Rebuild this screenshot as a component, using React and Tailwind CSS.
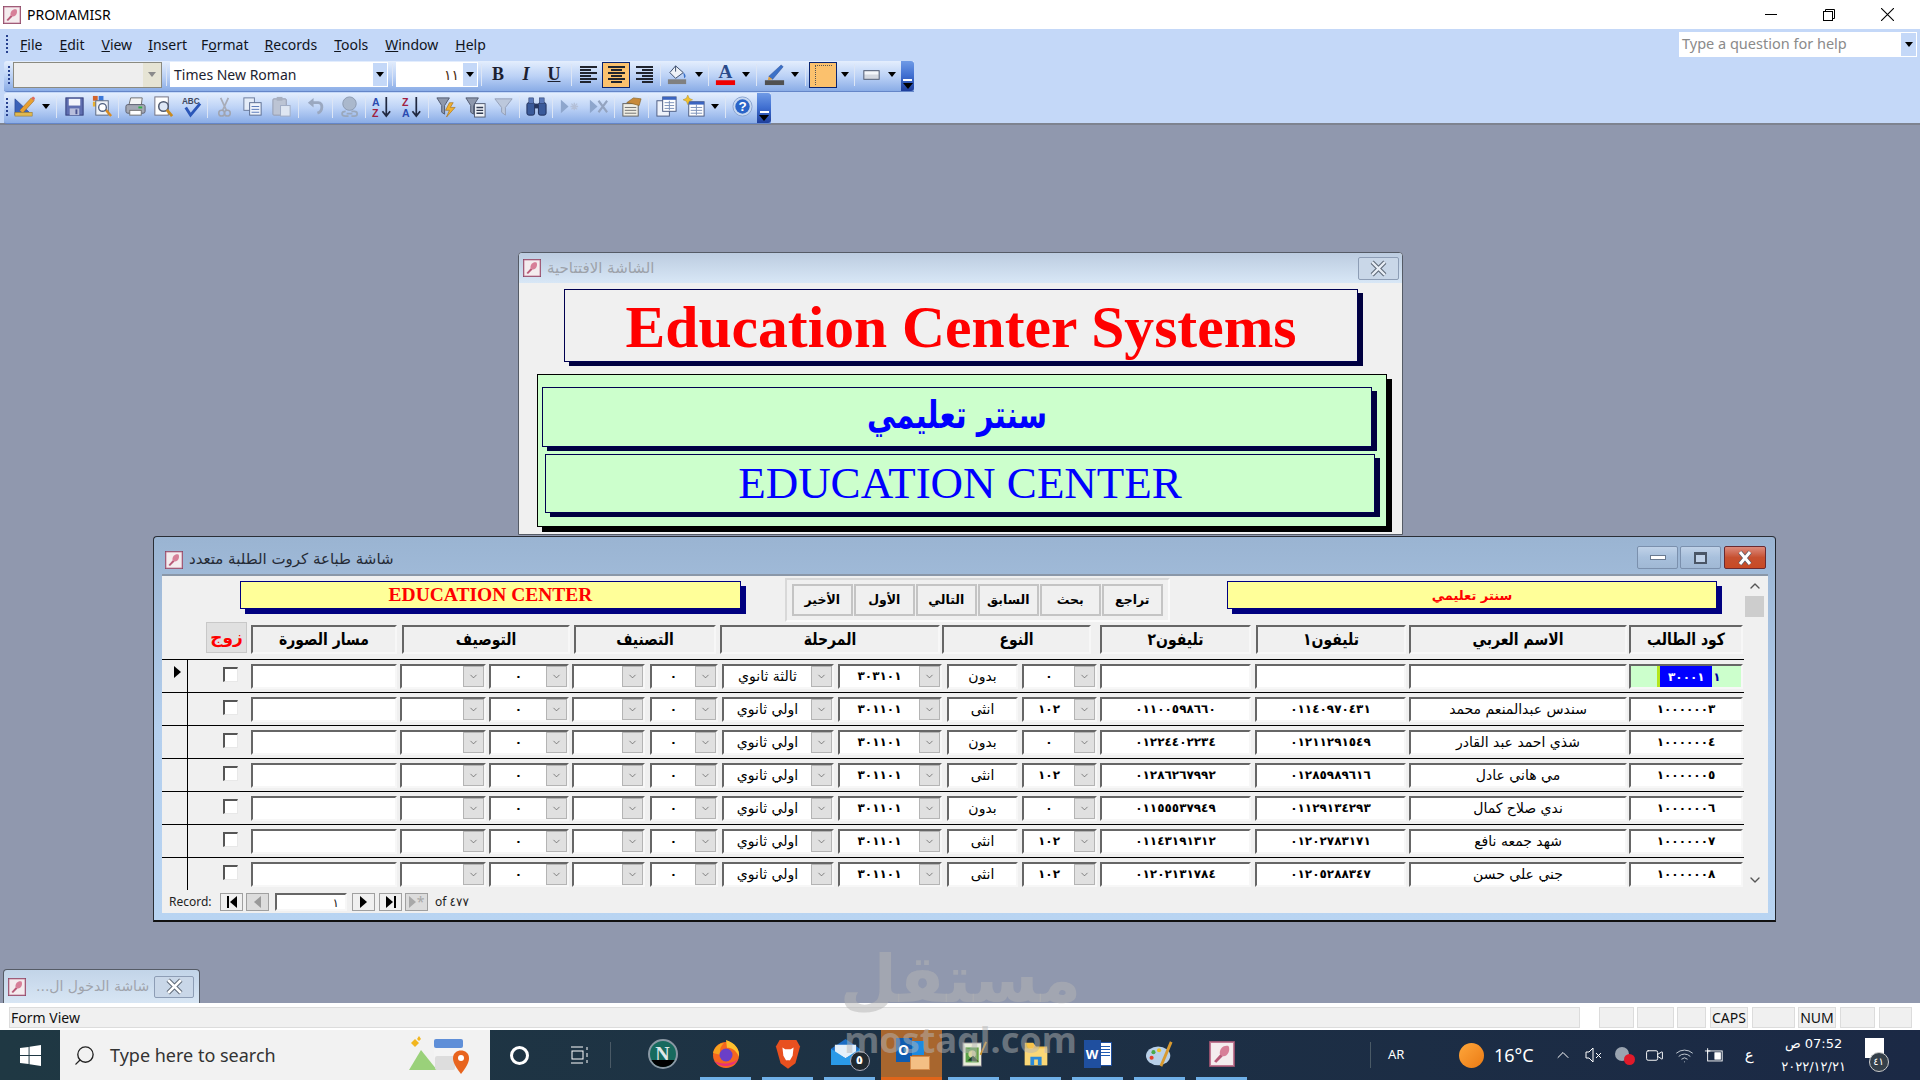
import React from 'react';
import { ChevronDown, ChevronUp, Search, Wifi, Video } from 'lucide-react';

const ar = "font-['DejaVu_Sans',sans-serif]";
const ui = "font-['Noto_Sans',sans-serif]";
const serif = "font-['Liberation_Serif',serif]";

const sunken = 'border-2 border-t-[#666666] border-l-[#666666] border-r-[#f7f7f7] border-b-[#f7f7f7]';

const rows = [
    { code: '١٠٠٠٠٠٠٣', name: 'سندس عبدالمنعم محمد', p1: '٠١١٤٠٩٧٠٤٣١', p2: '٠١١٠٠٥٩٨٦٦٠', typeNo: '١٠٢', type: 'انثى', stageNo: '٣٠١١٠١', stage: 'اولي ثانوي' },
    { code: '١٠٠٠٠٠٠٤', name: 'شذي احمد عبد القادر', p1: '٠١٢١١٢٩١٥٤٩', p2: '٠١٢٢٤٤٠٢٢٣٤', typeNo: '٠', type: 'بدون', stageNo: '٣٠١١٠١', stage: 'اولي ثانوي' },
    { code: '١٠٠٠٠٠٠٥', name: 'مي هاني عادل', p1: '٠١٢٨٥٩٨٩٦١٦', p2: '٠١٢٨٦٢٦٧٩٩٢', typeNo: '١٠٢', type: 'انثى', stageNo: '٣٠١١٠١', stage: 'اولي ثانوي' },
    { code: '١٠٠٠٠٠٠٦', name: 'ندي صلاح كمال', p1: '٠١١٢٩١٣٤٢٩٣', p2: '٠١١٥٥٥٣٧٩٤٩', typeNo: '٠', type: 'بدون', stageNo: '٣٠١١٠١', stage: 'اولي ثانوي' },
    { code: '١٠٠٠٠٠٠٧', name: 'شهد جمعه نافع', p1: '٠١٢٠٢٧٨٣١٧١', p2: '٠١١٤٣١٩١٣١٢', typeNo: '١٠٢', type: 'انثى', stageNo: '٣٠١١٠١', stage: 'اولي ثانوي' },
    { code: '١٠٠٠٠٠٠٨', name: 'جني علي حسن', p1: '٠١٢٠٥٢٨٨٣٤٧', p2: '٠١٢٠٢١٣١٧٨٤', typeNo: '١٠٢', type: 'انثى', stageNo: '٣٠١١٠١', stage: 'اولي ثانوي' },
];

const headers = [
    { label: 'مسار الصورة', cls: 'w-[146px] ml-[4px]' },
    { label: 'التوصيف', cls: 'w-[168px] ml-[5px]' },
    { label: 'التصنيف', cls: 'w-[142px] ml-[4px]' },
    { label: 'المرحلة', cls: 'w-[220px] ml-[4px]' },
    { label: 'النوع', cls: 'w-[149px] ml-[2px]' },
    { label: 'تليفون٢', cls: 'w-[151px] ml-[9px]' },
    { label: 'تليفون١', cls: 'w-[150px] ml-[5px]' },
    { label: 'الاسم العربي', cls: 'w-[218px] ml-[3px]' },
    { label: 'كود الطالب', cls: 'w-[114px] ml-[2px]' },
];

function AccessIcon({ className }) {
    return (
        <svg viewBox="0 0 18 18" className={className}>
            <rect x="0.5" y="0.5" width="17" height="17" fill="#f4ecee" stroke="#8a4a66" />
            <path d="M1 1 H17 V17 H1 Z" fill="none" stroke="#c07a94" strokeWidth="0.8" />
            <path d="M3.5 14 L8 9 L9.5 10.5 L5 15 Z" fill="#b85a78" />
            <path d="M7.5 9 C7 5 10.5 2.5 13.5 3.5 C15 6.5 13 11 9.5 10.5 Z" fill="#d77f98" />
        </svg>
    );
}

function Grip() {
    return (
        <div className="flex flex-col gap-[2px] w-[2px] shrink-0">
            {[0, 1, 2, 3, 4].map(i => <div key={i} className="w-[2px] h-[2px] bg-[#27418f]" />)}
        </div>
    );
}

function Dd({ className = 'w-[15px]' }) {
    return (
        <div className={`${className} shrink-0 flex items-center justify-center`}>
            <div className="w-0 h-0 border-l-[4px] border-r-[4px] border-t-[5px] border-l-transparent border-r-transparent border-t-black" />
        </div>
    );
}

function Sep({ className }) {
    return (
        <div className={`${className} shrink-0 flex justify-center`}>
            <div className="w-px h-[22px] bg-[#8aa8dc] border-r border-white/70" />
        </div>
    );
}

function Slot({ children, className = '' }) {
    return <div className={`w-[28px] h-[26px] shrink-0 flex items-center justify-center ${className}`}>{children}</div>;
}

function Overflow({ className }) {
    return (
        <div className={`${className} shrink-0 self-stretch -mb-[3px] bg-linear-to-b from-[#6f9ae6] via-[#3f6ed0] to-[#1f3f9c] rounded-r-[3px] flex flex-col items-center justify-end pb-[2px]`}>
            <div className="w-[9px] h-[2px] bg-white mb-[2px]" />
            <div className="w-0 h-0 border-l-[5px] border-r-[5px] border-t-[6px] border-l-transparent border-r-transparent border-t-black" />
        </div>
    );
}

// toolbar drawings, all on a 24 box
const Svg = ({ children }) => <svg viewBox="0 0 24 24" className="w-[23px] h-[23px]">{children}</svg>;

const icons = {
    form: <Svg><path d="M2 4 L17 18 V21 H2 Z" fill="#3b62b8" stroke="#24408c" strokeWidth="0.6" /><path d="M7 16 L19 3 L22 6 L10 19 Z" fill="#e8a030" stroke="#8a5a20" strokeWidth="0.5" /><path d="M19 3 L22 6 L23 3 L21 1.5 Z" fill="#e06a5a" /><rect x="2" y="18" width="18" height="4" fill="#e0b850" stroke="#8a6a20" strokeWidth="0.5" /></Svg>,
    save: <Svg><rect x="3" y="3" width="18" height="18" fill="#5f6eb0" stroke="#323c78" /><rect x="6" y="4" width="12" height="7" fill="#f2f4fa" /><rect x="7" y="14" width="10" height="7" fill="#b8bedc" /><rect x="13" y="15" width="2" height="5" fill="#4a5490" /></Svg>,
    saveAs: <Svg><rect x="2" y="1" width="5" height="5" fill="#d2642c" /><rect x="8" y="1" width="5" height="5" fill="#3b78d8" /><rect x="2" y="7" width="5" height="5" fill="#e8b030" /><rect x="5" y="6" width="13" height="15" fill="#eef2f8" stroke="#5a6880" /><path d="M15 15 L21 22" stroke="#d88a20" strokeWidth="2.5" /><circle cx="12" cy="13" r="4" fill="#fff" stroke="#506080" strokeWidth="1.4" /></Svg>,
    print: <Svg><path d="M7 3 H19 L18 11 H5 Z" fill="#f4f4f4" stroke="#707070" /><rect x="2" y="10" width="20" height="9" rx="2" fill="#a4a8b4" stroke="#5c6070" /><rect x="6" y="16" width="12" height="5" fill="#fff" stroke="#707070" /><rect x="15" y="12" width="4" height="2" fill="#30b048" /></Svg>,
    preview: <Svg><rect x="3" y="2" width="14" height="19" fill="#fff" stroke="#707080" /><circle cx="12" cy="12" r="5" fill="#dfe8f6" stroke="#505a70" strokeWidth="1.6" /><path d="M15.5 15.5 L21 22" stroke="#c88a20" strokeWidth="3" /></Svg>,
    spell: <Svg><text x="2" y="9" fontSize="8.5" fontWeight="700" fill="#404a60" fontFamily="Liberation Sans">ABC</text><path d="M6 13 L11 21 L21 9" stroke="#2a56b8" strokeWidth="3" fill="none" /></Svg>,
    cut: <Svg><path d="M8 3 L14 16 M16 3 L10 16" stroke="#a8acb8" strokeWidth="1.8" /><circle cx="9" cy="19" r="3" fill="none" stroke="#a0a4b0" strokeWidth="1.6" /><circle cx="15" cy="19" r="3" fill="none" stroke="#a0a4b0" strokeWidth="1.6" /></Svg>,
    copy: <Svg><rect x="3" y="3" width="11" height="13" fill="#e4ecf8" stroke="#6a7a9c" /><rect x="9" y="8" width="12" height="13" fill="#eef3fb" stroke="#5a6c90" /><path d="M11 12h8M11 15h8M11 18h8" stroke="#5878b8" /></Svg>,
    paste: <Svg><rect x="3" y="4" width="14" height="17" rx="1" fill="#bcc4d4" stroke="#949cb0" /><rect x="7" y="2" width="6" height="4" fill="#a8b0c0" /><rect x="11" y="11" width="10" height="11" fill="#dfe6f2" stroke="#a0acc4" /></Svg>,
    undo: <Svg><path d="M8 8 H15 C20 8 20 17 14 19" stroke="#9aa8c0" strokeWidth="3" fill="none" /><path d="M10 3 L4 8 L10 13 Z" fill="#9aa8c0" /></Svg>,
    link: <Svg><circle cx="12" cy="9" r="7" fill="#aab8cc" stroke="#8c9ab0" /><path d="M8 17 C3 17 3 22 8 22 L11 22 M14 17 H17 C21 17 21 22 17 22 L14 22 M9 19.5 H15" stroke="#9aa8bc" strokeWidth="1.8" fill="none" /></Svg>,
    az: <Svg><text x="2" y="11" fontSize="11" fontWeight="700" fill="#2a4ab0" fontFamily="Liberation Sans">A</text><text x="2" y="23" fontSize="11" fontWeight="700" fill="#a02040" fontFamily="Liberation Sans">Z</text><path d="M17 2 V21 M13 17 L17 22 L21 17" stroke="#202840" strokeWidth="1.8" fill="none" /></Svg>,
    za: <Svg><text x="2" y="11" fontSize="11" fontWeight="700" fill="#a02040" fontFamily="Liberation Sans">Z</text><text x="2" y="23" fontSize="11" fontWeight="700" fill="#2a4ab0" fontFamily="Liberation Sans">A</text><path d="M17 2 V21 M13 17 L17 22 L21 17" stroke="#202840" strokeWidth="1.8" fill="none" /></Svg>,
    bolt: <Svg><path d="M2 3 H15 L10 11 V20 L7 18 V11 Z" fill="#8e98ac" stroke="#505a70" /><path d="M15 8 L11 16 H15 L12 23 L21 13 H16 L19 8 Z" fill="#f0b030" stroke="#a06810" strokeWidth="0.6" /></Svg>,
    filterForm: <Svg><path d="M2 3 H15 L10 11 V20 L7 18 V11 Z" fill="#8e98ac" stroke="#505a70" /><rect x="11" y="9" width="11" height="14" fill="#eef2f8" stroke="#505a70" /><path d="M13 13h7M13 16h7M13 19h7" stroke="#303a50" strokeWidth="1.4" /></Svg>,
    filter: <Svg><path d="M3 4 H21 L14 13 V21 L10 18 V13 Z" fill="#bcc8dc" stroke="#94a0b8" /></Svg>,
    binoc: <Svg><rect x="2" y="8" width="8" height="13" rx="2" fill="#3a5a9a" stroke="#1f2f5a" /><rect x="14" y="8" width="8" height="13" rx="2" fill="#3a5a9a" stroke="#1f2f5a" /><rect x="4" y="3" width="5" height="6" fill="#5a78b8" stroke="#1f2f5a" strokeWidth="0.5" /><rect x="15" y="3" width="5" height="6" fill="#5a78b8" stroke="#1f2f5a" strokeWidth="0.5" /><rect x="10" y="9" width="4" height="5" fill="#26365f" /></Svg>,
    newRec: <Svg><path d="M3 5 L11 12 L3 19 Z" fill="#8ea6cc" /><path d="M17 8 V16 M13 12 H21 M14 9 L20 15 M20 9 L14 15" stroke="#b4c0d8" strokeWidth="1.4" /></Svg>,
    delRec: <Svg><path d="M3 5 L11 12 L3 19 Z" fill="#8ea6cc" /><path d="M12 6 L21 18 M21 6 L12 18" stroke="#94a4c0" strokeWidth="2.2" /></Svg>,
    db: <Svg><rect x="3" y="9" width="16" height="13" fill="#f0eee4" stroke="#606060" /><path d="M5 13h12M5 16h12M5 19h12" stroke="#707070" /><path d="M7 8 L14 3 L22 4 L20 11 L13 9 Z" fill="#c88a3a" stroke="#7a5a20" strokeWidth="0.6" /></Svg>,
    win: <Svg><rect x="2" y="6" width="13" height="16" fill="#eef2fa" stroke="#4a5a80" /><rect x="8" y="2" width="14" height="15" fill="#fff" stroke="#4a5a80" /><rect x="8" y="2" width="14" height="3" fill="#3a64c0" /><path d="M10 8h10M10 11h10M10 14h10M15 6v10" stroke="#7a90b8" /></Svg>,
    newObj: <Svg><rect x="6" y="7" width="16" height="15" fill="#fff" stroke="#4a5a80" /><rect x="6" y="7" width="16" height="3" fill="#3a64c0" /><path d="M8 13h12M8 16h12M8 19h12M14 10v11" stroke="#7a90b8" /><path d="M5 0 L6.5 3.5 L10 5 L6.5 6.5 L5 10 L3.5 6.5 L0 5 L3.5 3.5 Z" fill="#f0c030" stroke="#a88010" strokeWidth="0.4" /></Svg>,
    help: <Svg><circle cx="12" cy="12" r="10" fill="#c8d8f0" stroke="#8aa4d0" /><circle cx="12" cy="12" r="7.5" fill="#2a64c8" /><text x="12" y="17" fontSize="14" fontWeight="700" fill="#fff" textAnchor="middle" fontFamily="Liberation Sans">?</text></Svg>,
    fill: <Svg><path d="M10 3 L18 10 L10 16 L4 10 Z" fill="#eef2f8" stroke="#3a4a6a" /><path d="M10 3 V9" stroke="#3a4a6a" /><path d="M18 10 C21 12 21 15 19 16 Z" fill="#3a70c8" /><rect x="2" y="17" width="19" height="5" fill="#808080" /></Svg>,
    fontColor: <Svg><text x="12" y="16" fontSize="20" fontWeight="700" fill="#2a4a8a" textAnchor="middle" fontFamily="Liberation Serif">A</text><rect x="2" y="18" width="20" height="5" fill="#f00000" /></Svg>,
    line: <Svg><path d="M6 14 L19 2 L21 4 L10 17 Z" fill="#3a70c8" stroke="#1f3f88" strokeWidth="0.5" /><path d="M6 14 L10 17 L5 18 Z" fill="#e0a040" /><rect x="2" y="18" width="20" height="5" fill="#505050" /></Svg>,
    special: <Svg><rect x="4" y="8" width="16" height="9" fill="#d4d8e0" stroke="#505a70" /><rect x="5" y="9" width="14" height="3" fill="#f4f6fa" /></Svg>,
};

function Align({ kind }) {
    const widths = kind === 'left' ? ['w-full', 'w-[11px]', 'w-full', 'w-[11px]', 'w-full', 'w-[11px]']
        : kind === 'right' ? ['w-full', 'w-[11px] self-end', 'w-full', 'w-[11px] self-end', 'w-full', 'w-[11px] self-end']
            : ['w-full', 'w-[11px] self-center', 'w-full', 'w-[11px] self-center', 'w-full', 'w-[11px] self-center'];
    return (
        <div className="w-[17px] flex flex-col gap-[1px]">
            {widths.map((w, i) => <div key={i} className={`${w} h-[2px] bg-[#20242e]`} />)}
        </div>
    );
}

const barBg = 'bg-linear-to-b from-[#e4eefd] via-[#bcd2f6] to-[#8aace6] border-b border-[#6586c8] rounded-l-[3px] pb-[3px]';

function Toolbar1() {
    return (
        <div className={`w-[910px] ml-[4px] h-[31px] flex items-center ${barBg}`}>
            <div className="w-[9px] flex justify-center shrink-0"><Grip /></div>
            <div className="w-[149px] h-[26px] bg-[#eeeeee] border border-[#8a8a80] flex items-center justify-end shrink-0">
                <div className="w-[18px] h-full bg-[#e6e4d4] flex items-center justify-center">
                    <div className="w-0 h-0 border-l-[4px] border-r-[4px] border-t-[5px] border-l-transparent border-r-transparent border-t-[#8a8a8a]" />
                </div>
            </div>
            <Sep className="w-[8px]" />
            <div className={`w-[218px] h-[25px] bg-white flex items-center shrink-0 pl-[4px] text-[14px] text-[#1c2230] ${ui}`}>
                <span className="flex-1">Times New Roman</span>
                <div className="w-[16px] h-full bg-[#c4d8f8] border border-white flex items-center justify-center"><Dd className="w-[10px]" /></div>
            </div>
            <Sep className="w-[8px]" />
            <div className="w-[82px] h-[25px] bg-white flex items-center shrink-0">
                <span className={`flex-1 text-right pr-[3px] text-[14px] leading-none tracking-[1px] text-[#4a2c10] ${ar}`}>١١</span>
                <div className="w-[16px] h-full bg-[#c4d8f8] border border-white flex items-center justify-center"><Dd className="w-[10px]" /></div>
            </div>
            <Sep className="w-[6px]" />
            <Slot><span className={`text-[18px] font-bold text-[#1c2030] ${serif}`}>B</span></Slot>
            <Slot><span className={`text-[18px] italic font-bold text-[#1c2030] ${serif}`}>I</span></Slot>
            <Slot><span className={`text-[18px] underline font-bold text-[#1c2030] ${serif}`}>U</span></Slot>
            <Sep className="w-[6px]" />
            <Slot><Align kind="left" /></Slot>
            <Slot className="bg-[#fbc16d] border border-[#0a2470]"><Align kind="center" /></Slot>
            <Slot><Align kind="right" /></Slot>
            <Sep className="w-[5px]" />
            <Slot>{icons.fill}</Slot>
            <Dd />
            <Sep className="w-[5px]" />
            <Slot>{icons.fontColor}</Slot>
            <Dd className="w-[14px]" />
            <Sep className="w-[7px]" />
            <Slot>{icons.line}</Slot>
            <Dd className="w-[13px]" />
            <Sep className="w-[8px]" />
            <Slot className="bg-[#fbc16d] border border-[#0a2470]">
                <div className="w-[17px] h-[20px] border-t border-l border-dotted border-[#555]" />
            </Slot>
            <Dd />
            <Sep className="w-[5px]" />
            <Slot>{icons.special}</Slot>
            <Dd className="w-[14px]" />
            <div className="w-[2px] shrink-0" />
            <Overflow className="w-[13px]" />
        </div>
    );
}

function Toolbar2() {
    return (
        <div className={`w-[767px] ml-[4px] h-[31px] flex items-center ${barBg}`}>
            <div className="w-[6px] flex justify-center shrink-0"><Grip /></div>
            <Slot>{icons.form}</Slot><Dd />
            <Sep className="w-[7px]" />
            <Slot>{icons.save}</Slot><Slot>{icons.saveAs}</Slot>
            <Sep className="w-[5px]" />
            <Slot>{icons.print}</Slot><Slot>{icons.preview}</Slot><Slot>{icons.spell}</Slot>
            <Sep className="w-[5px]" />
            <Slot>{icons.cut}</Slot><Slot>{icons.copy}</Slot><Slot className="ml-px">{icons.paste}</Slot>
            <Sep className="w-[6px]" />
            <Slot>{icons.undo}</Slot>
            <Sep className="w-[6px]" />
            <Slot>{icons.link}</Slot>
            <Sep className="w-[4px]" />
            <Slot>{icons.az}</Slot><Slot className="ml-[2px]">{icons.za}</Slot>
            <Sep className="w-[7px]" />
            <Slot>{icons.bolt}</Slot><Slot className="ml-px">{icons.filterForm}</Slot><Slot>{icons.filter}</Slot>
            <Sep className="w-[5px]" />
            <Slot>{icons.binoc}</Slot>
            <Sep className="w-[5px]" />
            <Slot>{icons.newRec}</Slot><Slot className="ml-px">{icons.delRec}</Slot>
            <Sep className="w-[5px]" />
            <Slot>{icons.db}</Slot>
            <Sep className="w-[7px]" />
            <Slot>{icons.win}</Slot><Slot>{icons.newObj}</Slot><Dd className="w-[14px]" />
            <Sep className="w-[6px]" />
            <Slot>{icons.help}</Slot>
            <div className="w-px shrink-0" />
            <Overflow className="w-[14px]" />
        </div>
    );
}

function Menu() {
    const items = [['F', 'ile', 'ml-[12px]'], ['E', 'dit', 'ml-[17px]'], ['V', 'iew', 'ml-[17px]'], ['I', 'nsert', 'ml-[16px]'], ['', 'Format', 'ml-[14px]'], ['R', 'ecords', 'ml-[16px]'], ['T', 'ools', 'ml-[17px]'], ['W', 'indow', 'ml-[17px]'], ['H', 'elp', 'ml-[17px]']];
    return (
        <div className={`h-[32px] flex items-center pl-[6px] pb-[2px] text-[14px] text-[#10141c] ${ui}`}>
            <Grip />
            {items.map(([k, rest, ml]) => (
                <span key={rest} className={ml}>
                    {k ? <u>{k}</u> : null}
                    {k ? rest : <>F<u>o</u>rmat</>}
                </span>
            ))}
            <div className="ml-auto mr-[3px] w-[238px] h-[25px] bg-white flex items-center pl-[3px]">
                <span className="flex-1 text-[#8a8a8a] text-[14.5px]">Type a question for help</span>
                <div className="w-[15px] h-[23px] mr-px bg-[#c4d8f8] flex items-center justify-center"><Dd className="w-[10px]" /></div>
            </div>
        </div>
    );
}

function TitleBar() {
    return (
        <div className="h-[29px] bg-white flex items-center shrink-0">
            <AccessIcon className="w-[18px] h-[18px] ml-[3px]" />
            <span className={`ml-[6px] text-[14px] text-black ${ui}`}>PROMAMISR</span>
            <div className="ml-auto flex items-center">
                <div className="w-[12px] h-px bg-black mr-[46px]" />
                <svg viewBox="0 0 12 12" className="w-[12px] h-[12px] mr-[46px]" fill="none" stroke="#000">
                    <rect x="0.5" y="2.5" width="9" height="9" />
                    <path d="M2.5 2.5 V0.5 H11.5 V9.5 H9.5" />
                </svg>
                <svg viewBox="0 0 12 12" className="w-[13px] h-[13px] mr-[26px]" fill="none" stroke="#000"><path d="M0 0 L12 12 M12 0 L0 12" /></svg>
            </div>
        </div>
    );
}

function SplashWindow() {
    return (
        <div className="absolute left-[518px] top-[127px] w-[885px] h-[283px] bg-[#f0f0f0] border border-[#555b66] rounded-t-[4px] overflow-hidden">
            <div className="h-[30px] bg-linear-to-b from-[#bccce0] to-[#d8e7f6] flex items-center pl-[4px] pr-[3px]">
                <AccessIcon className="w-[18px] h-[18px]" />
                <span className={`ml-[6px] text-[15px] text-[#9da2aa] ${ar}`} dir="rtl">الشاشة الافتتاحية</span>
                <div className="ml-auto w-[41px] h-[23px] border border-[#8d9db5] rounded-[2px] bg-[#c9d7e8] flex items-center justify-center">
                    <svg viewBox="0 0 16 16" className="w-[17px] h-[17px]"><path d="M2 2 L14 14 M14 2 L2 14" stroke="#5f6a78" strokeWidth="4" /><path d="M2 2 L14 14 M14 2 L2 14" stroke="#e8eef6" strokeWidth="2" /></svg>
                </div>
            </div>
            <div className="ml-[45px] mt-[6px] w-[794px] h-[73px] border border-[#000050] shadow-[5px_4px_0_#000040] flex items-center justify-center pt-[4px]">
                <span className={`text-[59.6px] leading-none font-bold text-[#ff0000] whitespace-nowrap ${serif}`}>Education Center Systems</span>
            </div>
            <div className="ml-[18px] mt-[12px] w-[850px] h-[153px] bg-[#ccffcc] border border-black shadow-[5px_5px_0_#000] pl-[4px] pt-[12px]">
                <div className="w-[830px] h-[60px] border border-[#000050] shadow-[5px_4px_0_#000040] flex items-center justify-center pb-[3px]">
                    <span className={`inline-block scale-y-[1.3] text-[29px] leading-none font-bold text-[#0000ff] ${ar}`} dir="rtl">سنتر تعليمي</span>
                </div>
                <div className="ml-[3px] mt-[7px] w-[830px] h-[59px] border border-[#000050] shadow-[5px_4px_0_#000040] flex items-center justify-center">
                    <span className={`text-[45px] leading-none text-[#0000ff] whitespace-nowrap ${serif}`}>EDUCATION CENTER</span>
                </div>
            </div>
        </div>
    );
}

const digits = 'font-bold tracking-[2.4px] text-[12px]';
const words = 'text-[14px]';

function Combo({ value, w, num }) {
    return (
        <div className={`${w} h-[25px] shrink-0 bg-white flex items-center ${sunken}`}>
            <span className={`flex-1 text-center pb-[2px] leading-none text-black whitespace-nowrap ${num ? digits : words} ${ar}`} dir={num ? 'ltr' : 'rtl'}>{value}</span>
            <div className="w-[21px] h-[21px] bg-[#e0e0e0] border border-[#b4b4b4] flex items-center justify-center shrink-0">
                <ChevronDown className="w-[11px] h-[11px] text-[#555]" strokeWidth={1.5} />
            </div>
        </div>
    );
}

function Field({ value, w, num }) {
    return (
        <div className={`${w} h-[25px] shrink-0 bg-white flex items-center justify-center pb-[2px] leading-none text-black whitespace-nowrap ${num ? digits : words} ${ar} ${sunken}`} dir={num ? 'ltr' : 'rtl'}>
            {value}
        </div>
    );
}

function Row({ r, active }) {
    return (
        <div className="h-[33px] flex border-t border-black items-stretch w-[1582px]">
            <div className="w-[26px] border-r border-black shrink-0 flex items-start pl-[12px] pt-[6px]">
                {active && <div className="w-0 h-0 border-t-[6px] border-b-[6px] border-l-[7px] border-t-transparent border-b-transparent border-l-black" />}
            </div>
            <div className="flex items-start pt-[4px]">
                <div className="ml-[35px] mt-[3px] w-[15px] h-[15px] bg-white border-t-2 border-l-2 border-t-[#555] border-l-[#555] border-r border-b border-r-[#e8e8e8] border-b-[#e8e8e8] shrink-0" />
                <div className="ml-[13px] flex">
                    <Field w="w-[146px]" />
                    <Combo w="w-[86px] ml-[3px]" />
                    <Combo w="w-[80px] ml-[3px]" value="٠" num />
                    <Combo w="w-[73px] ml-[3px]" />
                    <Combo w="w-[68px] ml-[5px]" value="٠" num />
                    <Combo w="w-[112px] ml-[4px]" value={r.stage} />
                    <Combo w="w-[104px] ml-[4px]" value={r.stageNo} num />
                    <Field w="w-[71px] ml-[5px]" value={r.type} />
                    <Combo w="w-[75px] ml-[4px]" value={r.typeNo} num />
                    <Field w="w-[151px] ml-[3px]" value={r.p2} num />
                    <Field w="w-[151px] ml-[4px]" value={r.p1} num />
                    <Field w="w-[218px] ml-[3px]" value={r.name} />
                    {active ? (
                        <div className={`w-[114px] h-[25px] ml-[2px] shrink-0 bg-[#ccffcc] flex items-center justify-center pl-[6px] leading-none whitespace-nowrap ${digits} ${ar} ${sunken}`}>
                            <div className="w-[3px] h-[21px] bg-[#b5e61d]" />
                            <span className="w-[52px] h-[21px] bg-[#0000ff] text-white flex items-center justify-center">٣٠٠٠١</span>
                            <span className="text-[#0000a0] ml-[1px]">١</span>
                        </div>
                    ) : (
                        <Field w="w-[114px] ml-[2px]" value={r.code} num />
                    )}
                </div>
            </div>
        </div>
    );
}

function NavBtn({ children, disabled }) {
    return (
        <div className={`w-[23px] h-[18px] shrink-0 border border-[#a0a0a0] flex items-center justify-center ${disabled ? 'bg-[#dcdcdc]' : 'bg-[#f0f0f0]'}`}>
            {children}
        </div>
    );
}

function Tri({ color = 'border-l-black' }) {
    return <div className={`w-0 h-0 border-t-[6px] border-b-[6px] border-l-[7px] border-t-transparent border-b-transparent ${color}`} />;
}

function TriLeft({ color = 'border-r-black' }) {
    return <div className={`w-0 h-0 border-t-[6px] border-b-[6px] border-r-[7px] border-t-transparent border-b-transparent ${color}`} />;
}

function RecordBar() {
    return (
        <div className={`h-[23px] flex items-center pl-[7px] text-[12px] text-[#222] ${ui}`}>
            <span className="w-[51px] shrink-0">Record:</span>
            <NavBtn><div className="w-[2px] h-[12px] bg-black mr-px" /><TriLeft /></NavBtn>
            <div className="ml-[3px]"><NavBtn disabled><TriLeft color="border-r-[#999]" /></NavBtn></div>
            <div className={`ml-[6px] w-[72px] h-[18px] bg-white text-right pr-[6px] leading-[16px] ${ar} ${sunken}`}>١</div>
            <div className="ml-[5px]"><NavBtn><Tri /></NavBtn></div>
            <div className="ml-[4px]"><NavBtn><Tri /><div className="w-[2px] h-[12px] bg-black ml-px" /></NavBtn></div>
            <div className="ml-[3px]"><NavBtn disabled><Tri color="border-l-[#a8a8a8]" /><span className="text-[#a8a8a8] text-[14px] leading-none ml-px">*</span></NavBtn></div>
            <span className="ml-[7px]">of <span className={`tracking-[1px] ${ar}`}>٤٧٧</span></span>
        </div>
    );
}

function FormWindow() {
    const buttons = ['الأخير', 'الأول', 'التالي', 'السابق', 'بحث', 'تراجع'];
    return (
        <div className="absolute left-[153px] top-[411px] w-[1623px] h-[386px] bg-linear-to-b from-[#9ab4d2] via-[#b4cfee] to-[#b8d4f2] border border-[#2a2e36] border-r-[#20242c] border-b-2 border-b-[#111] rounded-t-[4px] pt-[8px] flex flex-col">
            <div className="h-[29px] flex items-center pl-[11px] pr-[9px] shrink-0">
                <AccessIcon className="w-[18px] h-[18px]" />
                <span className={`ml-[6px] text-[15px] text-[#252b36] ${ar}`} dir="rtl">شاشة طباعة كروت الطلبة متعدد</span>
                <div className="ml-auto flex -mt-[4px]">
                    <div className="w-[41px] h-[23px] rounded-[2px] border border-[#7b90ad] bg-linear-to-b from-[#c0d2e8] via-[#a8c0dc] to-[#a0b8d4] flex items-center justify-center">
                        <div className="w-[16px] h-[5px] bg-white border border-[#6a7a90]" />
                    </div>
                    <div className="ml-[2px] w-[41px] h-[23px] rounded-[2px] border border-[#7b90ad] bg-linear-to-b from-[#c0d2e8] via-[#a8c0dc] to-[#a0b8d4] flex items-center justify-center">
                        <div className="w-[13px] h-[12px] border-2 border-[#4a5666] border-t-[3px] bg-[#c0d2e8]" />
                    </div>
                    <div className="ml-[3px] w-[42px] h-[23px] rounded-[2px] border border-[#6a2a30] bg-linear-to-b from-[#dc8a7c] via-[#c65030] to-[#c84a24] flex items-center justify-center">
                        <svg viewBox="0 0 16 16" className="w-[18px] h-[16px]"><path d="M3 2 L13 14 M13 2 L3 14" stroke="#5a5a66" strokeWidth="4.4" /><path d="M3 2 L13 14 M13 2 L3 14" stroke="#fff" strokeWidth="3" /></svg>
                    </div>
                </div>
            </div>
            <div className="ml-[8px] mr-[7px] h-[339px] bg-[#f0f0f0] border-t-2 border-[#8a97a8] flex shrink-0">
                <div className="w-[1583px] flex flex-col shrink-0">
                    <div className="h-[46px] flex items-start shrink-0">
                        <div className="ml-[78px] mt-[5px] w-[501px] h-[28px] bg-[#ffff99] border border-[#000080] shadow-[5px_5px_0_#000080] flex items-center justify-center">
                            <span className={`text-[19.5px] leading-none font-bold text-[#ff0000] whitespace-nowrap ${serif}`}>EDUCATION CENTER</span>
                        </div>
                        <div className="ml-[44px] mt-[2px] w-[385px] h-[44px] border-2 border-[#fafafa] border-l-[#d8d8d8] border-t-[#d8d8d8] flex items-center pl-[5px]">
                            {buttons.map(b => (
                                <div key={b} className={`w-[60.5px] h-[32px] mr-[1.5px] border-2 border-[#c4c4c4] flex items-center justify-center text-[12.5px] font-bold text-black ${ar}`} dir="rtl">{b}</div>
                            ))}
                        </div>
                        <div className="ml-[57px] mt-[5px] w-[490px] h-[28px] bg-[#ffff99] border border-[#000080] shadow-[5px_5px_0_#000080] flex items-center justify-center">
                            <span className={`text-[13px] leading-none font-bold text-[#ff0000] ${ar}`} dir="rtl">سنتر تعليمي</span>
                        </div>
                    </div>
                    <div className="h-[37px] flex items-start shrink-0">
                        <div className={`ml-[44px] w-[41px] h-[31px] bg-[#e0e0e0] border border-[#c8c8c8] flex items-center justify-center text-[17px] font-bold text-[#ff0000] ${ar}`} dir="rtl">زوج</div>
                        {headers.map(h => (
                            <div key={h.label} className={`${h.cls} mt-[3px] h-[29px] shrink-0 flex items-center justify-center text-[14px] font-bold text-black whitespace-nowrap ${ar} ${sunken}`} dir="rtl">
                                <span className="inline-block scale-y-[1.2]">{h.label}</span>
                            </div>
                        ))}
                    </div>
                    <div className="h-[231px] shrink-0 overflow-hidden">
                        <Row active r={{ stage: 'ثالثة ثانوي', stageNo: '٣٠٣١٠١', type: 'بدون', typeNo: '٠' }} />
                        {rows.map(r => <Row key={r.code} r={r} />)}
                    </div>
                    <RecordBar />
                </div>
                <div className="w-[19px] h-[312px] flex flex-col items-center shrink-0">
                    <ChevronUp className="w-[16px] h-[16px] text-[#555] mt-[2px]" strokeWidth={2} />
                    <div className="w-[19px] h-[21px] bg-[#cdcdcd] mt-[2px]" />
                    <ChevronDown className="w-[16px] h-[16px] text-[#555] mt-auto" strokeWidth={2} />
                </div>
            </div>
        </div>
    );
}

function MinWindow() {
    return (
        <div className="absolute left-[3px] top-[844px] w-[197px] h-[34px] bg-linear-to-b from-[#c2d4e8] to-[#d8e6f4] border border-[#555b66] border-b-0 rounded-t-[4px] flex items-center pl-[4px]">
            <AccessIcon className="w-[18px] h-[18px]" />
            <span className={`ml-[10px] text-[14px] text-[#a0a4ac] whitespace-nowrap ${ar}`} dir="rtl">شاشة الدخول ال...</span>
            <div className="ml-auto mr-[5px] w-[40px] h-[22px] shrink-0 border border-[#8d9db5] rounded-[2px] bg-[#c9d7e8] flex items-center justify-center">
                <svg viewBox="0 0 16 16" className="w-[17px] h-[17px]"><path d="M2 2 L14 14 M14 2 L2 14" stroke="#5f6a78" strokeWidth="4.4" /><path d="M2 2 L14 14 M14 2 L2 14" stroke="#fff" strokeWidth="2.6" /></svg>
            </div>
        </div>
    );
}

function StatusBar() {
    const panels = [
        ['w-[35px] ml-[19px]', ''], ['w-[37px] ml-[3px]', ''], ['w-[29px] ml-[3px]', ''], ['w-[38px] ml-[4px]', 'CAPS'],
        ['w-[43px] ml-[4px]', ''], ['w-[38px] ml-[3px]', 'NUM'], ['w-[35px] ml-[4px]', ''], ['w-[33px] ml-[4px]', ''],
    ];
    return (
        <div className={`h-[27px] bg-white pt-[4px] pb-[2px] flex pl-[9px] text-[14px] text-[#111] shrink-0 ${ui}`}>
            <div className="w-[1571px] bg-[#f0f0f0] border border-[#dcdcdc] pl-px leading-[19px]">Form View</div>
            {panels.map(([cls, t], i) => (
                <div key={i} className={`${cls} bg-[#f0f0f0] border border-[#dcdcdc] text-center leading-[19px]`}>{t}</div>
            ))}
        </div>
    );
}

function TaskSlot({ children, on, active, className }) {
    return (
        <div className={`${className} h-[50px] shrink-0 flex items-center justify-center ${active ? 'bg-[#a8662e] border-b-[3px] border-[#e0651a]' : on ? 'border-b-[3px] border-[#6fb0e8]' : 'pb-[3px]'}`}>
            {children}
        </div>
    );
}

function Taskbar() {
    return (
        <div className={`h-[50px] bg-linear-to-r from-[#1f3843] to-[#1b2945] flex items-center shrink-0 text-white ${ui}`}>
            <div className="w-[60px] flex justify-center shrink-0">
                <svg viewBox="0 0 22 22" className="w-[21px] h-[21px]" fill="#fff"><path d="M0 3.2 L9 2 V10.4 H0 Z M10 1.8 L22 0 V10.4 H10 Z M0 11.6 H9 V20 L0 18.8 Z M10 11.6 H22 V22 L10 20.2 Z" /></svg>
            </div>
            <div className="w-[430px] h-[50px] bg-[#f2f2f2] flex items-center shrink-0">
                <Search className="ml-[13px] w-[23px] h-[23px] text-[#222] -scale-x-100" strokeWidth={1.4} />
                <span className="ml-[14px] text-[18px] text-[#333]">Type here to search</span>
                <svg viewBox="0 0 62 38" className="ml-auto mr-[19px] w-[62px] h-[38px]">
                    <path d="M6 3 L10 7 L6 11 L2 7 Z" fill="#f2b61f" /><path d="M10 0 L12 3 L10 5 L8 3 Z" fill="#f2b61f" />
                    <rect x="25" y="3" width="29" height="9" rx="2" fill="#5f8fd8" /><rect x="25" y="12" width="29" height="10" fill="#f4f4f4" />
                    <path d="M0 34 L12 14 L28 34 Z" fill="#9ad17a" /><rect x="26" y="20" width="20" height="14" rx="2" fill="#dddddd" />
                    <path d="M52 38 C44 28 44 24 44 22 C44 12 60 12 60 22 C60 24 60 28 52 38 Z" fill="#e8641e" /><circle cx="52" cy="22" r="3" fill="#fff" />
                </svg>
            </div>
            <div className="w-[58px] flex justify-center shrink-0"><div className="w-[19px] h-[19px] rounded-full border-[3px] border-white" /></div>
            <div className="w-[62px] flex justify-center shrink-0">
                <svg viewBox="0 0 20 20" className="w-[20px] h-[20px]" fill="none" stroke="#fff"><path d="M2 2 H14 M2 18 H14" /><rect x="3" y="6" width="11" height="8" /><path d="M18 2 V5 M18 8 V12 M18 15 V18" /></svg>
            </div>
            <div className="w-px h-[26px] bg-[#4a5a66] shrink-0" />
            <div className="w-[26px] shrink-0" />
            <TaskSlot className="w-[51px]">
                <div className="w-[30px] h-[30px] rounded-full bg-[#176a5e] border-2 border-[#8a98a4] flex items-center justify-center relative overflow-hidden">
                    <span className={`text-[20px] font-bold text-[#dfe8e8] ${serif}`}>N</span>
                    <div className="absolute bottom-0 w-full h-[7px] bg-black" />
                </div>
            </TaskSlot>
            <TaskSlot on className="w-[51px] ml-[12px]">
                <svg viewBox="0 0 30 30" className="w-[30px] h-[30px]"><circle cx="15" cy="16" r="13" fill="#f5661f" /><path d="M15 1 C24 4 29 10 28 18 C26 12 20 8 16 9 Z" fill="#ffc02e" /><path d="M2 14 C4 7 9 4 13 4 C9 8 8 12 10 16 Z" fill="#f7a21f" /><circle cx="15" cy="16" r="6.5" fill="#6a3fc8" /><path d="M3 22 C8 28 22 30 27 20 C22 25 10 26 3 22 Z" fill="#e8307a" /></svg>
            </TaskSlot>
            <TaskSlot on className="w-[51px] ml-[11px]">
                <svg viewBox="0 0 28 34" className="w-[26px] h-[32px]"><path d="M5 2 H23 L27 9 L22 27 L14 33 L6 27 L1 9 Z" fill="#e8501f" /><path d="M8 10 L11 12 H17 L20 10 L19 19 L16 24 H12 L9 19 Z" fill="#fff" /><path d="M12 24 H16 L14 27 Z" fill="#e8501f" /></svg>
            </TaskSlot>
            <TaskSlot on className="w-[51px] ml-[11px]">
                <div className="relative w-[40px] h-[30px]">
                    <svg viewBox="0 0 32 28" className="w-[31px] h-[27px]"><path d="M1 10 L16 0 L31 10 V27 H1 Z" fill="#1b6cc4" /><path d="M5 6 H27 V14 L16 20 L5 14 Z" fill="#e4f0fa" /><path d="M1 10 L16 20 L31 10 V27 H1 Z" fill="#2a9ae8" /></svg>
                    <div className={`absolute right-0 bottom-[-2px] w-[20px] h-[20px] rounded-full bg-[#20282e] border border-[#aab] text-[12px] font-bold leading-[16px] text-center ${ar}`}>٥</div>
                </div>
            </TaskSlot>
            <TaskSlot active className="w-[61px] ml-[6px]">
                <div className="relative w-[32px] h-[32px]">
                    <div className="absolute top-[3px] left-[8px] w-[20px] h-[14px] bg-[#1c8ae0]" />
                    <div className="absolute top-0 left-0 w-[16px] h-[24px] bg-[#0f5cb0] text-[14px] font-bold text-center leading-[24px]">O</div>
                    <div className="absolute bottom-0 right-[-2px] w-[20px] h-[14px] bg-[#f4bf84] border border-[#d48a4a]" />
                </div>
            </TaskSlot>
            <TaskSlot on className="w-[51px] ml-[6px]">
                <svg viewBox="0 0 30 30" className="w-[28px] h-[28px]"><rect x="3" y="3" width="20" height="25" fill="#e8ecd8" stroke="#667" /><rect x="6" y="8" width="14" height="16" fill="#58a048" /><circle cx="13" cy="15" r="4" fill="#d8d8a0" /><path d="M8 22 L14 17 L20 23 Z" fill="#1f3a1f" /><path d="M28 2 L22 16" stroke="#c8902a" strokeWidth="2" /></svg>
            </TaskSlot>
            <TaskSlot on className="w-[51px] ml-[11px]">
                <svg viewBox="0 0 30 30" className="w-[28px] h-[28px]"><path d="M3 3 H12 L15 7 H27 V27 H3 Z" fill="#f6c24a" /><rect x="3" y="9" width="24" height="18" fill="#fad776" /><path d="M9 27 V18 H21 V27 H17 V21 H13 V27 Z" fill="#2a8ad8" /></svg>
            </TaskSlot>
            <TaskSlot on className="w-[51px] ml-[11px]">
                <div className="relative w-[28px] h-[28px]">
                    <div className="absolute right-0 top-[2px] w-[20px] h-[24px] bg-white border border-[#1f4f9f]" />
                    <div className="absolute right-[2px] top-[6px] w-[9px] flex flex-col gap-[2px]">
                        {[0, 1, 2, 3].map(i => <div key={i} className="h-px bg-[#1f5bb4]" />)}
                    </div>
                    <div className={`absolute left-0 top-0 w-[17px] h-[28px] bg-[#1f4f9f] text-[13px] font-bold text-center leading-[28px] ${ui}`}>W</div>
                </div>
            </TaskSlot>
            <TaskSlot on className="w-[51px] ml-[11px]">
                <svg viewBox="0 0 32 30" className="w-[30px] h-[28px]"><ellipse cx="14" cy="17" rx="13" ry="10" fill="#b8d0e8" /><circle cx="7" cy="19" r="2.2" fill="#e8402a" /><circle cx="9" cy="13" r="2.2" fill="#4aa84a" /><circle cx="15" cy="11" r="2.2" fill="#f0c020" /><path d="M28 2 L17 28" stroke="#d89a30" strokeWidth="3" /></svg>
            </TaskSlot>
            <TaskSlot on className="w-[51px] ml-[11px]"><AccessIcon className="w-[26px] h-[26px]" /></TaskSlot>
            <div className="w-px h-[26px] bg-[#4a5a66] ml-[123px] shrink-0" />
            <span className="ml-[17px] text-[13px] w-[20px] shrink-0">AR</span>
            <div className="ml-[51px] w-[25px] h-[25px] rounded-full bg-linear-to-br from-[#ffa73a] to-[#ea7a10] shrink-0" />
            <span className="ml-[10px] text-[18px]">16°C</span>
            <ChevronUp className="ml-[19px] w-[20px] h-[20px] shrink-0" strokeWidth={1.2} />
            <svg viewBox="0 0 20 20" className="ml-[11px] w-[20px] h-[20px] shrink-0" fill="none" stroke="#fff"><path d="M2 7 H5 L9 3 V17 L5 13 H2 Z" /><path d="M12 8 L17 13 M17 8 L12 13" /></svg>
            <div className="ml-[11px] relative w-[20px] h-[20px] shrink-0">
                <div className="w-[14px] h-[14px] rounded-full bg-[#9aa4b0] mt-[2px]" />
                <div className="absolute right-0 bottom-0 w-[11px] h-[11px] rounded-full bg-[#e01a2a]" />
            </div>
            <Video className="ml-[10px] w-[19px] h-[19px] shrink-0" strokeWidth={1.2} />
            <Wifi className="ml-[11px] w-[19px] h-[19px] text-[#c8d0d8] shrink-0" strokeWidth={1.2} />
            <svg viewBox="0 0 22 20" className="ml-[10px] w-[20px] h-[19px] shrink-0" fill="none" stroke="#fff"><rect x="4" y="5" width="16" height="11" /><rect x="12" y="7" width="6" height="7" fill="#fff" /><path d="M4 2 V8 M1 5 H7" /></svg>
            <span className={`ml-[21px] text-[15px] ${ar}`}>ع</span>
            <div className={`ml-[24px] w-[72px] flex flex-col items-center text-[13px] leading-[23px] shrink-0 ${ar}`}>
                <span dir="rtl">07:52 ص</span>
                <span>٢٠٢٢/١٢/٢١</span>
            </div>
            <div className="ml-[15px] relative w-[24px] h-[34px] shrink-0">
                <div className="absolute top-0 left-0 w-[19px] h-[20px] bg-white" />
                <div className={`absolute right-0 bottom-0 w-[20px] h-[20px] rounded-full bg-[#35404a] border border-[#ccc] text-[10px] leading-[18px] text-center ${ar}`}>٤١</div>
            </div>
        </div>
    );
}

export default function App() {
    return (
        <div className="w-[1920px] h-[1080px] flex flex-col overflow-hidden relative bg-[#9098ae]">
            <TitleBar />
            <div className="h-[96px] bg-[#c4d8f8] border-b-2 border-[#7e8390] shrink-0">
                <Menu />
                <Toolbar1 />
                <div className="h-px" />
                <Toolbar2 />
            </div>
            <div className="flex-1 relative bg-[#9098ae]">
                <SplashWindow />
                <FormWindow />
                <MinWindow />
            </div>
            <StatusBar />
            <Taskbar />
            <div className="absolute left-[843px] top-[940px] w-[235px] flex flex-col items-center pointer-events-none text-[#b4b4b4]/50">
                <span className={`text-[66px] leading-[80px] font-bold ${ar}`} dir="rtl">مستقل</span>
                <span className={`text-[36px] leading-[40px] font-bold ${ui}`}>mostaql.com</span>
            </div>
        </div>
    );
}
